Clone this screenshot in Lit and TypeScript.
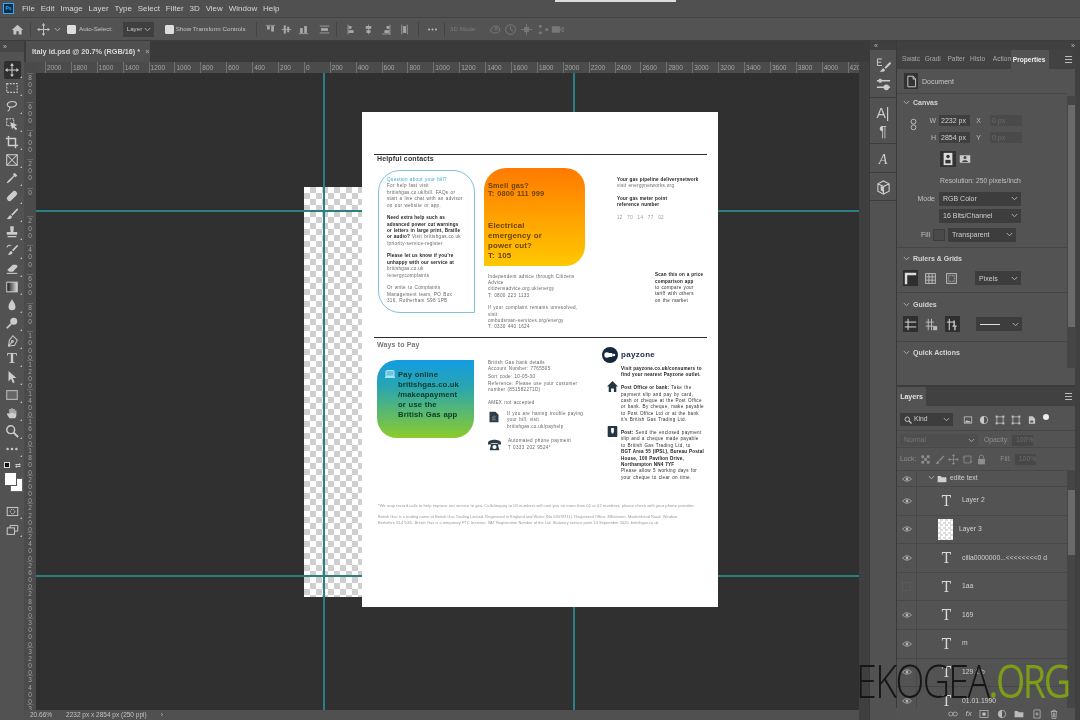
import { LitElement, html, css, svg } from "lit";
import { customElement } from "lit/decorators.js";

const P: Record<string, any> = {
  home: svg`<path fill="currentColor" stroke="none" d="M8 2 1 8.500h2V14h3.600v-4h2.800v4H13V8.500h2z"/>`,
  move: svg`<path d="M8 1.500v13M1.500 8h13"/><path fill="currentColor" stroke="none" d="M8 0 5.800 3h4.400zM8 16l-2.200-3h4.400zM0 8l3-2.200v4.400zM16 8l-3-2.200v4.400z"/>`,
  marquee: svg`<rect x="2" y="3" width="12" height="10" stroke-dasharray="2 1.500"/>`,
  lasso: svg`<path d="M3 5c2-3 9-3 10 0 .7 3-4 5-8 4-2-.5-3-2.500-2-4zM5 9c1 2 0 4-2 5"/>`,
  objsel: svg`<rect x="2" y="2" width="8" height="8" stroke-dasharray="2 1"/><path fill="currentColor" stroke="none" d="m6 6 8 3-3 1.500 3 3-1.500 1.500-3-3L8 14z"/>`,
  crop: svg`<path d="M4 1v11h11M1 4h11v11" stroke-width="1.700"/>`,
  frame: svg`<rect x="2" y="2" width="12" height="12"/><path d="m2 2 12 12M14 2 2 14"/>`,
  drop: svg`<path fill="currentColor" stroke="none" d="m11 2 3 3-2 2-1-1-6 6.500L2.500 14 2 13.500 3.500 11 10 5 9 4z"/>`,
  heal: svg`<g transform="rotate(-45 8 8)"><rect x="1" y="5" width="14" height="6" rx="3" fill="currentColor" stroke="none"/></g>`,
  brush: svg`<path fill="currentColor" stroke="none" d="M14 1.500 7 8.500l1.500 1.500L15 3zM6 9.500c-2 .5-1.500 2.500-4 4 3 1 6 0 6-2.500z"/>`,
  stamp: svg`<path fill="currentColor" stroke="none" d="M6 1.500h4v3L9.500 8H14v3H2V8h4.500L6 4.500zM3 12.500h10V14H3z"/>`,
  hist: svg`<path fill="currentColor" stroke="none" d="M14 2 8 8l1.500 1.500L15 3.500zM7 9c-2 .5-1.500 2.500-4 4 3 1 6 0 5.500-2.500z"/><path d="M2 5c1-2 3-3 5-2"/>`,
  eraser: svg`<path fill="currentColor" stroke="none" d="M9 3h4l1.500 2L9 11H5L2.500 9z"/><path d="M2 13h12"/>`,
  grad: svg`<defs><linearGradient id="gr"><stop offset="0" stop-color="#111"/><stop offset="1" stop-color="#ddd"/></linearGradient></defs><rect x="2" y="2.500" width="12" height="11" fill="url(#gr)" stroke="#ccc"/>`,
  burn: svg`<path fill="currentColor" stroke="none" d="M8 1c1 3 4 5 4 9a4 4 0 0 1-8 0c0-4 3-6 4-9z"/>`,
  dodge: svg`<circle cx="10" cy="6" r="4" fill="currentColor" stroke="none"/><path d="m7 9-5 5" stroke-width="2"/>`,
  pen: svg`<path d="M9 2 14 7l-3 6-7 1 1-7zM4 14l4-5"/><circle cx="8.500" cy="8.500" r="1"/>`,
  arrow: svg`<path fill="currentColor" stroke="none" d="M4 1v12l3-3 2 5 2-1-2-5h4z"/>`,
  rect: svg`<rect x="2" y="3" width="12" height="10" fill="#666" stroke="#bbb"/>`,
  hand: svg`<path fill="currentColor" stroke="none" d="M5 14 2 9l1.500-1L5 9.500V3.500h1.500V8h.7V2.500h1.600V8h.7V3.500H11V8.500h.7V5H13v5c0 2-1 4-2 4z"/>`,
  zoom: svg`<circle cx="6.500" cy="6.500" r="4.500" stroke-width="1.700"/><path d="m10 10 5 5" stroke-width="2.200"/>`,
  dots: svg`<g fill="currentColor" stroke="none"><circle cx="3" cy="8" r="1.400"/><circle cx="8" cy="8" r="1.400"/><circle cx="13" cy="8" r="1.400"/></g>`,
  qmask: svg`<rect x="1.500" y="3" width="13" height="10"/><circle cx="8" cy="8" r="2.800" stroke-dasharray="1.500 1"/>`,
  screen: svg`<rect x="1.500" y="6" width="9" height="8"/><path d="M5 6V3h9.500v7H10.500"/>`,
  al1: svg`<path d="M1 2h14" stroke-width="1"/><rect x="3" y="3" width="4" height="5" fill="currentColor" stroke="none"/><rect x="9" y="3" width="4" height="8" fill="currentColor" stroke="none"/>`,
  al2: svg`<path d="M1 8h14"/><rect x="4" y="2" width="3" height="12" fill="currentColor" stroke="none"/><rect x="9" y="4" width="3" height="8" fill="currentColor" stroke="none"/>`,
  al3: svg`<path d="M1 14h14" /><rect x="3" y="6" width="4" height="7" fill="currentColor" stroke="none"/><rect x="9" y="3" width="4" height="10" fill="currentColor" stroke="none"/>`,
  al4: svg`<path d="M1 3h14M1 13h14"/><rect x="3" y="6" width="10" height="4" fill="currentColor" stroke="none"/>`,
  d1: svg`<path d="M3 1v14"/><rect x="4" y="3" width="4" height="4" fill="currentColor" stroke="none"/><rect x="4" y="9" width="7" height="4" fill="currentColor" stroke="none"/>`,
  d2: svg`<path d="M8 1v14"/><rect x="4" y="3" width="8" height="4" fill="currentColor" stroke="none"/><rect x="5" y="9" width="6" height="4" fill="currentColor" stroke="none"/>`,
  d3: svg`<path d="M13 1v14M2 14.500h12"/><rect x="8" y="3" width="4" height="4" fill="currentColor" stroke="none"/><rect x="5" y="9" width="7" height="4" fill="currentColor" stroke="none"/>`,
  d4: svg`<path d="M4 1v14M12 1v14"/><rect x="6" y="3" width="4" height="10" fill="currentColor" stroke="none"/>`,
  o1: svg`<path d="M2 10c0-4 4-7 7-6 3 0 5 3 4 6-3 3-8 3-11 0z"/><circle cx="9" cy="7" r="1.500"/>`,
  o2: svg`<circle cx="8" cy="8" r="6"/><path d="M8 4v4l3 2"/>`,
  o3: svg`<path d="M8 1v14M1 8h14"/><rect x="5" y="5" width="6" height="6" fill="currentColor" stroke="none"/>`,
  o4: svg`<g fill="currentColor" stroke="none"><circle cx="4" cy="4" r="2"/><circle cx="12" cy="8" r="2"/><circle cx="4" cy="12" r="2"/></g>`,
  cam: svg`<rect x="1" y="4" width="10" height="8" fill="currentColor" stroke="none"/><path d="m11 8 4-3v6z"/>`,
  ebrush: svg`<path d="M1.500 1h5M1.500 1v7h5M1.500 4.500h4" stroke-width="1"/><path fill="currentColor" stroke="none" d="M15 4 9 10l1.500 1.500L16 6zM8 11c-2 .5-1.500 2-4 3.500 3 .5 6 0 5.500-2z"/>`,
  sliders: svg`<path d="M1 4h14M1 11h14" stroke-width="1.500"/><rect x="3" y="2" width="3" height="4" fill="currentColor" stroke="none"/><circle cx="11" cy="11" r="3" fill="currentColor" stroke="none"/>`,
  cube: svg`<path d="M8 1 14 4v8l-6 3-6-3V4zM2 4l6 3 6-3M8 7v8"/><path d="M5 6 8 8v5L5 11z" fill="currentColor" stroke="none"/>`,
  doc: svg`<path d="M3.500 1.500H10L13 5v9.500H3.500zM10 1.500V5h3"/>`,
  link: svg`<rect x="5" y="1.500" width="6" height="6" rx="3"/><rect x="5" y="8.500" width="6" height="6" rx="3"/>`,
  port: svg`<rect x="3" y="1" width="10" height="14" fill="#ddd" stroke="none"/><circle cx="8" cy="5" r="2" fill="#333" stroke="none"/><path d="M5 13V9h6v4z" fill="#333" stroke="none"/>`,
  land: svg`<rect x="1" y="3" width="14" height="10" fill="#ccc" stroke="none"/><circle cx="8" cy="6" r="2" fill="#444" stroke="none"/><path d="M4 12c0-3 8-3 8 0z" fill="#444" stroke="none"/>`,
  rulers: svg`<path d="M1 1h14v3H4v11H1z" fill="currentColor" stroke="none"/>`,
  grid: svg`<rect x="2" y="2" width="12" height="12"/><path d="M6 2v12M10 2v12M2 6h12M2 10h12"/>`,
  dotted: svg`<rect x="2" y="2" width="12" height="12"/><rect x="4.500" y="4.500" width="7" height="7" stroke-dasharray="1 1"/>`,
  g1: svg`<path d="M5 1v14M1 5h14M1 11h14"/>`,
  g2: svg`<path d="M4 1v14M8 1v14M1 5h10M1 10h10"/><rect x="10" y="10" width="5" height="5" fill="currentColor" stroke="none"/>`,
  g3: svg`<path d="M4 1v14M1 5h9"/><path d="M10 3v7M8 10h5M11 11v4" stroke-width="1.500"/>`,
  img: svg`<rect x="2" y="3" width="12" height="10"/><path fill="currentColor" stroke="none" d="m3 12 3-4 2 2 2-1 3 3z"/>`,
  half: svg`<circle cx="8" cy="8" r="6"/><path fill="currentColor" stroke="none" d="M8 2a6 6 0 0 0 0 12z"/>`,
  trans: svg`<rect x="3" y="3" width="10" height="10"/><g fill="currentColor" stroke="none"><rect x="1" y="1" width="3" height="3"/><rect x="12" y="1" width="3" height="3"/><rect x="1" y="12" width="3" height="3"/><rect x="12" y="12" width="3" height="3"/></g>`,
  smart: svg`<path fill="currentColor" stroke="none" d="M3 2h6l4 4v8H3z"/><rect x="5" y="9" width="5" height="3" fill="#555" stroke="none"/>`,
  checker: svg`<g fill="currentColor" stroke="none"><rect x="2" y="2" width="4" height="4"/><rect x="10" y="2" width="4" height="4"/><rect x="6" y="6" width="4" height="4"/><rect x="2" y="10" width="4" height="4"/><rect x="10" y="10" width="4" height="4"/></g>`,
  lbrush: svg`<path fill="currentColor" stroke="none" d="M14 2 7 9l1.500 1.500L15 3.500zM6 10c-2 .5-1 2.500-4 4 3 1 6 0 5.500-2.500z"/>`,
  artb: svg`<path d="M3 3h10v10H3z"/><path d="M1 5h3M12 11h3"/>`,
  lock: svg`<rect x="3" y="7" width="10" height="8" fill="currentColor" stroke="none"/><path d="M5 7V4.500a3 3 0 0 1 6 0V7"/>`,
  eye: svg`<path d="M1 8c3-4.500 11-4.500 14 0-3 4.500-11 4.500-14 0z" stroke-width="1.300"/><circle cx="8" cy="8" r="2.200" fill="currentColor" stroke="none"/>`,
  folder: svg`<path fill="currentColor" stroke="none" d="M1 3h5l1.500 2H15v8H1z"/>`,
  chain: svg`<rect x="1" y="5" width="7" height="6" rx="3"/><rect x="8" y="5" width="7" height="6" rx="3"/>`,
  mask: svg`<rect x="1.500" y="2.500" width="13" height="11"/><circle cx="8" cy="8" r="3" fill="currentColor" stroke="none"/>`,
  newl: svg`<path d="M3 1.500h10v13H3z"/><path d="M8 5v6M5 8h6"/>`,
  trash: svg`<path d="M3 4h10M6 4V2h4v2M4 4l1 11h6l1-11M7 6v7M9 6v7"/>`,
  monitor: svg`<rect x="1.500" y="2.500" width="13" height="9" rx="1.500" fill="#6fc0e0" stroke="#cff"/><path d="M0 13h16" stroke="#cff" stroke-width="2"/>`,
  billi: svg`<path fill="#2b3e4a" stroke="none" d="M2 1h8l4 4v10H2z"/><text x="8" y="12" font-size="8" font-family="Liberation Sans" font-weight="700" text-anchor="middle" fill="#fff">£</text>`,
  phone: svg`<path fill="#2b3e4a" stroke="none" d="M0 6c0-5 16-5 16 0v2h-4V6H4v2H0zM4 7h8l2 8H2z"/><circle cx="8" cy="11" r="2.500" fill="#fff" stroke="none"/>`,
  phouse: svg`<path fill="#243642" stroke="none" d="M8 0 0 8h2.500v8H6v-5h4v5h3.500V8H16z"/>`,
  post: svg`<rect x="1" y="0" width="14" height="16" rx="1" fill="#243642" stroke="none"/><path d="M6 3h4v5l-1 3H7L6 8z" fill="#fff" stroke="none"/>`,
  payz: svg`<circle cx="8" cy="8" r="8" fill="#16263f" stroke="none"/><circle cx="5" cy="8" r="2.700" fill="#fff" stroke="none"/><path d="M7 6h3l1 2-1 2H7z" fill="#fff" stroke="none"/><circle cx="12" cy="8" r="1.200" fill="#fff" stroke="none"/>`,
};

const ic = (n: string, s = 14, cls = "") =>
  html`<svg class="ic ${cls}" width=${s} height=${s} viewBox="0 0 16 16" fill="none" stroke="currentColor" stroke-width="1.200">${P[n]}</svg>`;
const chev = () =>
  html`<svg class="chev" width="7" height="5" viewBox="0 0 7 5" fill="none" stroke="currentColor"><path d="M.8 1 3.500 3.800 6.200 1"/></svg>`;

const menu = ["File", "Edit", "Image", "Layer", "Type", "Select", "Filter", "3D", "View", "Window", "Help"];
const tools = ["move","marquee","lasso","objsel","crop","frame","drop","heal","brush","stamp","hist","eraser","grad","burn","dodge","pen","T","arrow","rect","hand","zoom","dots"];
const hticks = Array.from({ length: 32 }, (_, i) => Math.abs(-2000 + i * 200));
const vticks = Array.from({ length: 23 }, (_, i) => Math.abs(-800 + i * 200));
const layers = ["Layer 2", "Layer 3", "cilla0000000...<<<<<<<<0 d", "1aa", "169", "m", "129 1 b", "01.01.1990"];

@customElement("doc-page")
class DocPage extends LitElement {
  static styles = css`
    :host { display: block; width: 356px; height: 495px; background: #fff; padding: 42px 11px 0 12px; box-sizing: border-box;
      font: 4.600px/6.370px "Liberation Sans", sans-serif; color: #666; letter-spacing: .3px; word-spacing: .5px; }
    b { color: #222; font-weight: 700; letter-spacing: .2px; word-spacing: .2px; }
    .rule { border-top: 1.300px solid #2c2c2c; }
    h2 { margin: 0; padding-left: 3px; font: 700 7px/8px "Liberation Sans", sans-serif; color: #333; letter-spacing: .15px; word-spacing: 0; height: 12px; }
    h2.grey { color: #777; padding-top: 3px; height: 19px; }
    .sec { display: grid; grid-template-columns: 106px 133px 1fr; height: 170px; margin-left: 4px; }
    .sec2 { display: grid; grid-template-columns: 111px 114px 1fr; margin-left: 3px; }
    .bill { width: 97px; height: 143px; box-sizing: border-box; border: 1px solid #7fc0e0; border-radius: 22px 22px 0 22px; padding: 6px 0 0 8px; margin-top: 3px; white-space: nowrap; }
    .q { color: #3aa6dc; }
    .gap { height: 6.370px; }
    .smell { width: 101px; height: 98px; margin-top: 1px; box-sizing: border-box; background: linear-gradient(#ff7a00, #ffc800); border-radius: 22px 20px 20px 0;
      font: 700 7.900px/10px "Liberation Sans", sans-serif; color: #6b4300; padding: 14px 0 0 4px; letter-spacing: .15px; word-spacing: .5px; }
    .smell p { margin: 0; font-size: 7.400px; line-height: 8.300px; }
    .smell div { margin-top: 22px; }
    .under { padding: 7.500px 0 0 4px; white-space: nowrap; }
    .right { padding-top: 10px; display: flex; flex-direction: column; white-space: nowrap; }
    .scan { margin: 51px 0 0 38px; }
    .ref { margin-top: 6px; color: #999; word-spacing: 3px; }
    .pay { width: 97px; height: 78px; box-sizing: border-box; background: linear-gradient(#139ce2, #2aa6b0 35%, #8ccb2c); border-radius: 20px 0 20px 20px;
      font: 700 7.700px/10px "Liberation Sans", sans-serif; color: #0a3b2c; padding: 9.500px 0 0 21px; position: relative; letter-spacing: .12px; word-spacing: .4px; white-space: nowrap; }
    .pay .ic { position: absolute; left: 8px; top: 9px; }
    .mid { white-space: nowrap; }
    .il { display: flex; gap: 7px; align-items: flex-start; margin-top: 5px; }
    .il .ic { flex: none; }
    .pz { display: flex; flex-direction: column; margin-top: -13px; color: #333; white-space: nowrap; }
    .pzh { display: flex; align-items: center; gap: 3px; font: 700 8px/16px "Liberation Sans", sans-serif; color: #1b2a44; height: 16px; }
    .pzr { display: flex; margin-top: 6.500px; }
    .pzr .ic { flex: none; margin: -4px 3px 0 5px; }
    .pzt { margin-left: 19px; }
    .foot { margin: 22px 0 0 4px; font-size: 4.150px; line-height: 6px; color: #999; letter-spacing: .03px; word-spacing: 0; white-space: nowrap; }
    .foot.two { margin-top: 4.500px; font-size: 3.950px; }
  `;
  render() {
    return html`
      <div class="rule"></div>
      <h2>Helpful contacts</h2>
      <div class="sec">
        <div class="bill">
          <span class="q">Question about your bill?</span><br>
          For help fast visit<br>britishgas.co.uk/bill. FAQs or<br>start a live chat with an advisor<br>on our website or app.
          <div class="gap"></div>
          <b>Need extra help such as<br>advanced power cut warnings<br>or letters in large print, Braille<br>or audio?</b> Visit britishgas.co.uk<br>/priority-service-register
          <div class="gap"></div>
          <b>Please let us know if you're<br>unhappy with our service at</b><br>britishgas.co.uk<br>/energycomplaints
          <div class="gap"></div>
          Or write to Complaints<br>Management team, PO Box<br>316, Rotherham S98 1PB
        </div>
        <div>
          <div class="smell"><p>Smell gas?<br>T: 0800 111 999</p><div>Electrical<br>emergency or<br>power cut?<br>T: 105</div></div>
          <div class="under">Independent advice through Citizens<br>Advice<br>citizensadvice.org.uk/energy<br>T: 0800 223 1133
            <div class="gap"></div>If your complaint remains unresolved,<br>visit<br>ombudsman-services.org/energy<br>T: 0330 440 1624</div>
        </div>
        <div class="right">
          <div><b>Your gas pipeline deliverynetwork</b><br>visit energynetworks.org<div class="gap"></div><b>Your gas meter point<br>reference number</b><div class="ref">12 70 14 77 02</div></div>
          <div class="scan"><b>Scan this on a price<br>comparison app</b><br><span style="color:#333">to compare your<br>tariff with others<br>on the market</span></div>
        </div>
      </div>
      <div class="rule"></div>
      <h2 class="grey">Ways to Pay</h2>
      <div class="sec2">
        <div class="pay">${ic("monitor", 10)}Pay online<br>britishgas.co.uk<br>/makeapayment<br>or use the<br>British Gas app</div>
        <div class="mid">
          British Gas bank details<br>Account Number: 7765505<div style="height:1.500px"></div>
          Sort code: 10-05-30<br>Reference: Please use your customer<br>number (851582271D)<div class="gap"></div>
          AMEX not accepted
          <div class="il">${ic("billi", 12)}<div>If you are having trouble paying<br>your bill, visit<br>britishgas.co.uk/payhelp</div></div>
          <div class="il" style="margin-top:8px">${ic("phone", 13)}<div>Automated phone payment<br>T 0333 202 9524*</div></div>
        </div>
        <div class="pz">
          <div class="pzh">${ic("payz", 16)}payzone</div>
          <div class="pzt" style="margin-top:3px"><b>Visit payzone.co.uk/consumers to<br>find your nearest Payzone outlet.</b></div>
          <div class="pzr">${ic("phouse", 11)}<div><b>Post Office or bank:</b> Take the<br>payment slip and pay by card,<br>cash or cheque at the Post Office<br>or bank. By cheque, make payable<br>to Post Office Ltd or at the bank<br>it's British Gas Trading Ltd.</div></div>
          <div class="pzr">${ic("post", 11)}<div><b>Post:</b> Send the enclosed payment<br>slip and a cheque made payable<br>to British Gas Trading Ltd, to<br><b>BGT Area 55 (IPSL), Bureau Postal<br>House, 100 Pavilion Drive,<br>Northampton NN4 7YF</b><br>Please allow 5 working days for<br>your cheque to clear on time.</div></div>
        </div>
      </div>
      <div class="foot">*We may record calls to help improve our service to you. Calls/inquiry to 03 numbers will cost you no more than 01 or 02 numbers, please check with your phone provider.</div>
      <div class="foot two">British Gas is a trading name of British Gas Trading Limited. Registered in England and Wales (No 03078711). Registered Office: Millstream, Maidenhead Road, Windsor<br>Berkshire SL4 5GD. British Gas is a temporary FTC licensee. VAT Registration Number of the Ltd. Statutory service point 14 September 2020. britishgas.co.uk</div>
    `;
  }
}

@customElement("app-root")
class AppRoot extends LitElement {
  static styles = css`
    :host { display: block; position: relative; width: 1080px; height: 720px; overflow: hidden; background: #404040;
      font: 7.500px/1 "Liberation Sans", sans-serif; color: #c8c8c8; filter: blur(.45px); }
    .ic { display: block; flex: none; }
    .app { display: grid; grid-template-rows: 18px 23px 679px; height: 720px; }
    .menu { display: flex; align-items: center; background: #505050; padding-left: 3px; gap: 5.900px; position: relative; border-bottom: 1px solid #444; box-sizing: border-box; font-size: 8px; color: #d6d6d6; }
    .ps { width: 11px; height: 11px; background: #0d2f45; border: 1px solid #31a8ff; box-sizing: border-box; font: 700 5px/9px "Liberation Sans", sans-serif; color: #31a8ff; text-align: center; margin-right: 2.100px; }
    .white { position: absolute; left: 555px; top: 0; width: 121px; height: 1.500px; background: #ddd; }
    .opts { display: flex; align-items: center; background: #535353; color: #c4c4c4; border-bottom: 1px solid #3d3d3d; box-sizing: border-box; font-size: 6.200px; padding-left: 11px; white-space: nowrap; }
    .sp { width: 1px; height: 15px; background: #444; flex: none; }
    .cb { width: 7px; height: 7px; border-radius: 1px; background: #ddd; border: 1.500px solid #555; outline: 1px solid #ddd; outline-offset: -1px; box-sizing: content-box; flex: none; }
    .ddl { display: flex; justify-content: space-between; align-items: center; background: #3f3f3f; color: #c4c4c4; box-sizing: border-box; }
    .ows { display: flex; align-items: center; }
    .dim { color: #a8a8a8; }
    .work { display: grid; grid-template-columns: 24px 846px 26px 184px; height: 679px; }
    .tb { background: #525252; display: flex; flex-direction: column; align-items: center; color: #ccc; }
    .grip { height: 11px; width: 100%; font-size: 7px; line-height: 11px; padding-left: 3px; color: #bbb; box-sizing: border-box; background: #474747; }
    .tls { padding-top: 9px; display: flex; flex-direction: column; }
    .t { width: 17px; height: 18.050px; display: flex; align-items: center; justify-content: center; position: relative; font: 700 15px/1 "Liberation Serif", serif; color: #ccc; }
    .t.on { background: #2f2f2f; border-radius: 2px; }
    .t::after { content: ""; position: absolute; right: -1px; bottom: 1px; border: 1px solid transparent; border-right-color: #bbb; border-bottom-color: #bbb; }
    .swatch { position: relative; width: 20px; height: 32px; margin-top: 4px; }
    .fg, .bg { position: absolute; background: #fff; }
    .fg { left: 2px; top: 10px; width: 11px; height: 12px; z-index: 1; border: 1px solid #555; }
    .bg { left: 8px; top: 16px; width: 11px; height: 12px; border: 1px solid #666; }
    .mini { position: absolute; left: 2px; top: 0; width: 6px; height: 6px; background: #111; border: 1px solid #ddd; box-sizing: border-box; }
    .sw { position: absolute; right: 1px; top: 0; font-size: 7px; }
    .center { display: grid; grid-template-columns: 12px 823px 11px; grid-template-rows: 21px 11px 637px 10px; }
    .tabs { grid-column: 1 / 4; background: #3a3a3a; }
    .tab { width: 124px; margin-left: 2px; height: 21px; background: #505050; font: 700 7.300px/21px "Liberation Sans", sans-serif; color: #d8d8d8; padding-left: 6px; box-sizing: border-box; white-space: nowrap; overflow: hidden; }
    .tab i { font-style: normal; color: #999; margin-left: 3px; }
    .corner { background: #4a4a4a; }
    .hr { background: #4b4b4b; display: flex; overflow: hidden; padding-left: 9px; font-size: 6.500px; color: #a4a4a4; }
    .hr span { flex: 0 0 25.900px; box-sizing: border-box; border-left: 1px solid #707070; padding-left: 1px; line-height: 11px; }
    .fill1 { background: #3f3f3f; }
    .vr { background: #4b4b4b; overflow: hidden; font-size: 6.500px; color: #a4a4a4; text-align: center; }
    .vr div { height: 28.700px; border-top: 1px solid #6a6a6a; box-sizing: border-box; line-height: 7.200px; width: 6px; margin: 0 0 0 3px; word-break: break-all; overflow: hidden; }
    .canvas { background: #303030; position: relative; overflow: hidden; }
    .checker { position: absolute; left: 268px; top: 114px; width: 58px; height: 410px;
      background: repeating-conic-gradient(#cfcfcf 0 25%, #fff 0 50%) 0 0 / 12px 12px; }
    .g { position: absolute; background: #2a7f82; }
    .g.v { width: 2px; top: 0; bottom: 0; }
    .g.h { height: 2px; left: 0; right: 0; }
    doc-page { position: absolute; left: 326px; top: 39px; }
    .status { grid-column: 1 / 3; background: #505050; font-size: 6.500px; line-height: 10px; color: #c0c0c0; display: flex; padding-left: 6px; gap: 14px; overflow: hidden; height: 10px; }
    .dock { background: #525252; border-left: 1px solid #3a3a3a; margin-left: -1px; display: flex; flex-direction: column; align-items: center; color: #ccc; }
    .dgrip { align-self: stretch; height: 9px; background: #3f3f3f; font-size: 7px; line-height: 9px; padding-left: 4px; color: #bbb; }
    .dg { align-self: stretch; display: flex; flex-direction: column; align-items: center; gap: 4px; padding: 8px 0 5px; border-bottom: 1px solid #3d3d3d; }
    .dg span { font: 400 14px/14px "Liberation Sans", sans-serif; height: 14px; }
    .right { background: #404040; border-left: 1px solid #3a3a3a; padding-right: 5px; display: flex; flex-direction: column; }
    .rtop { height: 9px; text-align: right; font-size: 7px; color: #bbb; line-height: 9px; }
    .ptabs { display: flex; height: 19px; background: #424242; align-items: center; font-size: 6.600px; color: #a8a8a8; padding-left: 5px; position: relative; }
    .ptabs span { width: 22.700px; overflow: hidden; white-space: nowrap; flex: none; }
    .ptabs .on { background: #535353; color: #eee; font-weight: 700; width: 38px; line-height: 19px; padding-left: 2px; box-sizing: border-box; margin-left: -1px; }
    .ham { position: absolute; right: 3px; width: 7px; height: 5px; border-top: 1px solid #bbb; border-bottom: 1px solid #bbb; }
    .ham::after { content: ""; display: block; height: 1px; background: #bbb; margin-top: 1.500px; }
    .props { background: #535353; height: 316px; display: grid; grid-template-columns: 170px 9px; }
    .pmain { display: flex; flex-direction: column; font-size: 7px; }
    .docrow { height: 24px; display: flex; align-items: center; gap: 4px; padding-left: 7px; border-bottom: 1px solid #474747; color: #c8c8c8; }
    .ibox { background: #333; width: 14px; height: 16px; display: flex; align-items: center; justify-content: center; }
    .head { display: flex; align-items: center; gap: 3px; padding-left: 6px; font-weight: 700; font-size: 7px; color: #d4d4d4; height: 14px; }
    .chev { flex: none; color: #aaa; }
    .pscroll { background: #454545; margin-top: 27px; height: 272px; width: 9px; position: relative; }
    .pscroll::after { content: ""; position: absolute; left: 1px; right: 1px; top: 9px; height: 222px; background: #6a6a6a; }
    .canvasbox { position: relative; }
    .linkic { position: absolute; left: 10px; top: 9px; color: #bbb; }
    .wh { display: grid; grid-template-columns: 35px 31px 12px 8px 32px; align-items: center; row-gap: 6px; padding-left: 7px; margin-top: 6px; }
    .wh label { text-align: right; padding-right: 3px; color: #bbb; }
    .fld { height: 11px; background: #3f3f3f; color: #d0d0d0; line-height: 11px; padding-left: 2px; }
    .fld.off { background: #4a4a4a; color: #6a6a6a; }
    .orient { display: flex; gap: 3px; padding-left: 43px; margin-top: 8px; align-items: center; height: 16px; }
    .pi { background: #333; padding: 1px; }
    .res { margin: 11px 0 0 43px; color: #c0c0c0; font-size: 6.800px; }
    .fr { display: grid; grid-template-columns: 34px 82px; align-items: center; margin-left: 4px; column-gap: 4px; color: #c0c0c0; }
    .fr label { text-align: right; }
    .sel { height: 14px; padding: 0 3px 0 4px; display: flex; align-items: center; justify-content: space-between; background: #3d3d3d; color: #cfcfcf; box-sizing: border-box; }
    .sep { border-top: 1px solid #464646; }
    .icons { display: flex; align-items: center; padding-left: 6px; height: 17px; }
    .ib { width: 15px; height: 16px; display: flex; align-items: center; justify-content: center; color: #bbb; flex: none; }
    .ib.on { background: #2f2f2f; color: #ddd; }
    .lgap { height: 2px; background: #3b3b3b; }
    .ltabs { height: 19px; display: flex; background: #414141; align-items: center; position: relative; font-size: 7px; font-weight: 700; color: #e0e0e0; }
    .ltabs span { background: #535353; width: 29px; height: 19px; line-height: 19px; text-align: center; }
    .lay { background: #535353; flex: 1; display: flex; flex-direction: column; font-size: 6.800px; overflow: hidden; }
    .lr { display: flex; align-items: center; padding-left: 3px; border-bottom: 1px solid #484848; color: #8e8e8e; box-sizing: border-box; }
    .rows { flex: 1; display: grid; grid-template-columns: 170px 9px; overflow: hidden; }
    .lrow { height: 28.600px; display: flex; align-items: center; border-bottom: 1px solid #484848; box-sizing: border-box; color: #d0d0d0; white-space: nowrap; }
    .eye { width: 19px; height: 100%; display: flex; align-items: center; justify-content: center; border-right: 1px solid #484848; flex: none; color: #b8b8b8; }
    .T { font: 400 14px/1 "DejaVu Serif", serif; color: #d8d8d8; width: 15px; text-align: center; margin: 0 8px 0 22px; flex: none; }
    .thumb { width: 15px; height: 21px; margin: 0 6px 0 21px; background: repeating-conic-gradient(#ddd 0 25%, #fff 0 50%) 0 0 / 5px 5px; flex: none; }
    .lscroll { background: #454545; position: relative; }
    .lscroll::after { content: ""; position: absolute; left: 1px; right: 1px; top: 19px; height: 65px; background: #6a6a6a; }
    .lbot { height: 12px; position: absolute; left: 896px; width: 179px; bottom: 0; background: #535353; display: flex; align-items: center; padding-left: 52px; gap: 7.500px; box-sizing: border-box; color: #bbb; }
    .wm { position: absolute; left: 856px; top: 651px; font: 300 46px/58px "Open Sans", sans-serif; color: #161616; letter-spacing: -2px; white-space: nowrap; transform: scaleX(.82); transform-origin: 0 0; }
    .wm i { font-style: normal; font-weight: 400; color: #7e9c18; letter-spacing: -3px; }
  `;

  opt(left: number, c: any) {
    return html`<span style="margin-left:${left}px" class="ows">${c}</span>`;
  }

  render() {
    return html`<div class="app">
      <div class="menu"><div class="ps">Ps</div>${menu.map((m) => html`<span>${m}</span>`)}<div class="white"></div></div>
      <div class="opts">
        ${ic("home", 13)}
        ${this.opt(6, html`<span class="sp"></span>`)}
        ${this.opt(6, ic("move", 13))}
        ${this.opt(4, chev())}
        ${this.opt(6, html`<span class="cb"></span>`)}
        ${this.opt(3, "Auto-Select:")}
        ${this.opt(10, html`<span class="ddl" style="width:31px;height:15px;padding:0 3px 0 4px">Layer ${chev()}</span>`)}
        ${this.opt(11, html`<span class="cb"></span>`)}
        ${this.opt(2, "Show Transform Controls")}
        ${this.opt(10, html`<span class="sp"></span>`)}
        <span class="ows dim">
        ${this.opt(8, ic("al1", 11))}
        ${this.opt(5, ic("al2", 11))}
        ${this.opt(6, ic("al3", 11))}
        ${this.opt(10, ic("al4", 11))}
        ${this.opt(6.5, html`<span class="sp"></span>`)}
        ${this.opt(8.5, ic("d1", 11))}
        ${this.opt(6, ic("d2", 11))}
        ${this.opt(7, ic("d3", 11))}
        ${this.opt(7, ic("d4", 11))}
        ${this.opt(8.5, html`<span class="sp"></span>`)}
        </span>
        ${this.opt(7.5, ic("dots", 11))}
        ${this.opt(6.5, html`<span class="sp"></span>`)}
        ${this.opt(5, html`<span style="color:#7c7c7c">3D Mode:</span>`)}
        ${this.opt(12.5, html`<span style="color:#777">${ic("o1", 13)}</span>`)}
        ${this.opt(2, html`<span style="color:#777">${ic("o2", 13)}</span>`)}
        ${this.opt(3, html`<span style="color:#777">${ic("o3", 13)}</span>`)}
        ${this.opt(4, html`<span style="color:#777">${ic("o4", 13)}</span>`)}
        ${this.opt(1, html`<span style="color:#777">${ic("cam", 13)}</span>`)}
      </div>
      <div class="work">
        <div class="tb">
          <div class="grip">»</div>
          <div class="tls">
            ${tools.map((t, i) => html`<div class="t ${i === 0 ? "on" : ""}">${t === "T" ? "T" : ic(t, 14)}</div>`)}
          </div>
          <div class="swatch"><div class="mini"></div><span class="sw">⇄</span><div class="fg"></div><div class="bg"></div></div>
          <div class="t" style="margin-top:8px">${ic("qmask", 13)}</div>
          <div class="t">${ic("screen", 13)}</div>
        </div>
        <div class="center">
          <div class="tabs"><div class="tab">Italy id.psd @ 20.7% (RGB/16) * <i>×</i></div></div>
          <div class="corner"></div>
          <div class="hr">${hticks.map((v) => html`<span>${v}</span>`)}</div>
          <div class="fill1"></div>
          <div class="vr">${vticks.map((v) => html`<div>${v}</div>`)}</div>
          <div class="canvas">
            <div class="checker"></div>
            <div class="g v" style="left:287px"></div>
            <div class="g v" style="left:537px"></div>
            <div class="g h" style="top:137px"></div>
            <div class="g h" style="top:502px"></div>
            <doc-page></doc-page>
          </div>
          <div class="fill1"></div>
          <div class="status"><span>20.66%</span><span>2232 px x 2854 px (250 ppi)</span><span>›</span></div>
          <div class="fill1"></div>
        </div>
        <div class="dock">
          <div class="dgrip">«</div>
          <div class="dg">${ic("ebrush", 15)}${ic("sliders", 15)}</div>
          <div class="dg"><span>A|</span><span>¶</span></div>
          <div class="dg" style="padding-top:9px"><span style="font-family:'Liberation Serif',serif;font-style:italic">A</span></div>
          <div class="dg" style="padding-top:7px">${ic("cube", 15)}</div>
        </div>
        <div class="right">
          <div class="rtop">»</div>
          <div class="ptabs"><span>Swatc</span><span>Gradi</span><span>Patter</span><span>Histo</span><span style="width:19px">Action</span><span class="on">Properties</span><div class="ham"></div></div>
          <div class="props">
            <div class="pmain">
              <div class="docrow"><span class="ibox">${ic("doc", 13)}</span>Document</div>
              <div class="head" style="margin-top:1px">${chev()}Canvas</div>
              <div class="canvasbox">
                <span class="linkic">${ic("link", 13)}</span>
                <div class="wh">
                  <label>W</label><div class="fld">2232 px</div><label style="grid-column:3/5;text-align:center">X</label><div class="fld off">0 px</div>
                  <label>H</label><div class="fld">2854 px</div><label style="grid-column:3/5;text-align:center">Y</label><div class="fld off">0 px</div>
                </div>
              </div>
              <div class="orient"><span class="pi">${ic("port", 14)}</span><span style="color:#bbb">${ic("land", 12)}</span></div>
              <div class="res">Resolution: 250 pixels/inch</div>
              <div class="fr" style="margin-top:7px"><label>Mode</label><div class="sel">RGB Color ${chev()}</div></div>
              <div class="fr" style="margin-top:3px"><span></span><div class="sel">16 Bits/Channel ${chev()}</div></div>
              <div class="fr" style="margin-top:5px;grid-template-columns:25px 12px 68px;column-gap:3px;margin-left:8px"><label>Fill</label><div style="height:12px;background:#4a4a4a;border:1px solid #3d3d3d;box-sizing:border-box"></div><div class="sel">Transparent ${chev()}</div></div>
              <div class="sep" style="margin-top:5px"></div>
              <div class="head" style="margin-top:4px">${chev()}Rulers &amp; Grids</div>
              <div class="icons" style="margin-top:4px"><span class="ib on">${ic("rulers", 13)}</span><span class="ib" style="margin-left:5px">${ic("grid", 13)}</span><span class="ib" style="margin-left:6px">${ic("dotted", 13)}</span><span class="sel" style="width:46px;margin-left:16px">Pixels ${chev()}</span></div>
              <div class="sep" style="margin-top:5px"></div>
              <div class="head" style="margin-top:5px">${chev()}Guides</div>
              <div class="icons" style="margin-top:4px"><span class="ib on">${ic("g1", 13)}</span><span class="ib" style="margin-left:6px">${ic("g2", 13)}</span><span class="ib on" style="margin-left:6px">${ic("g3", 13)}</span><span class="sel" style="width:46px;margin-left:16px"><span style="display:block;width:20px;height:1.500px;background:#ddd"></span> ${chev()}</span></div>
              <div class="sep" style="margin-top:8px"></div>
              <div class="head" style="margin-top:4px">${chev()}Quick Actions</div>
            </div>
            <div class="pscroll"></div>
          </div>
          <div class="lgap"></div>
          <div class="ltabs"><span>Layers</span><div class="ham"></div></div>
          <div class="lay">
            <div class="lr" style="height:25px;gap:6px;color:#c8c8c8;padding-top:3px"><span class="sel" style="width:53px;height:13px;background:#3d3d3d;gap:2px;justify-content:flex-start">${ic("zoom", 8)}Kind<span style="flex:1"></span>${chev()}</span><span style="margin-left:4px">${ic("img", 10)}</span><span>${ic("half", 10)}</span><span>${ic("trans", 10)}</span><span>${ic("trans", 10)}</span><span>${ic("smart", 10)}</span><span style="width:6px;height:6px;border-radius:50%;background:#eee;margin-top:-5px"></span></div>
            <div class="lr" style="height:17px;padding-top:2px"><span class="sel" style="width:78px;height:12px;background:#4e4e4e;color:#777">Normal ${chev()}</span><span style="margin-left:6px">Opacity:</span><span class="sel" style="width:21px;height:11px;margin-left:3px;background:#474747;color:#6d6d6d">100%</span></div>
            <div class="lr" style="height:23px"><span>Lock:</span><span style="margin-left:4px">${ic("checker", 11)}</span><span style="margin-left:3px">${ic("lbrush", 11)}</span><span style="margin-left:3px">${ic("move", 11)}</span><span style="margin-left:3px">${ic("artb", 11)}</span><span style="margin-left:3px">${ic("lock", 11)}</span><span style="margin-left:13px">Fill:</span><span class="sel" style="width:21px;height:11px;margin-left:4px;background:#474747;color:#6d6d6d">100%</span></div>
            <div class="rows">
              <div>
                <div class="lrow" style="height:16px"><span class="eye">${ic("eye", 10)}</span><span style="margin-left:11px">${chev()}</span><span style="margin:0 3px 0 2px">${ic("folder", 10)}</span>edite text</div>
                ${layers.map((n, i) => html`<div class="lrow"><span class="eye">${i === 3 ? html`<span style="width:7px;height:7px;border:1px solid #5a5a5a"></span>` : ic("eye", 10)}</span>${i === 1 ? html`<div class="thumb"></div>` : html`<span class="T">T</span>`}${n}</div>`)}
              </div>
              <div class="lscroll"></div>
            </div>
          </div>
        </div>
      </div>
    </div>
    <div class="lbot">${ic("chain", 10)}<span style="font-size:8px;font-style:italic">fx</span>${["mask", "half", "folder", "newl", "trash"].map((n) => ic(n, 10))}</div>
    <div class="wm">EKOGEA<i>.ORG</i></div>`;
  }
}
